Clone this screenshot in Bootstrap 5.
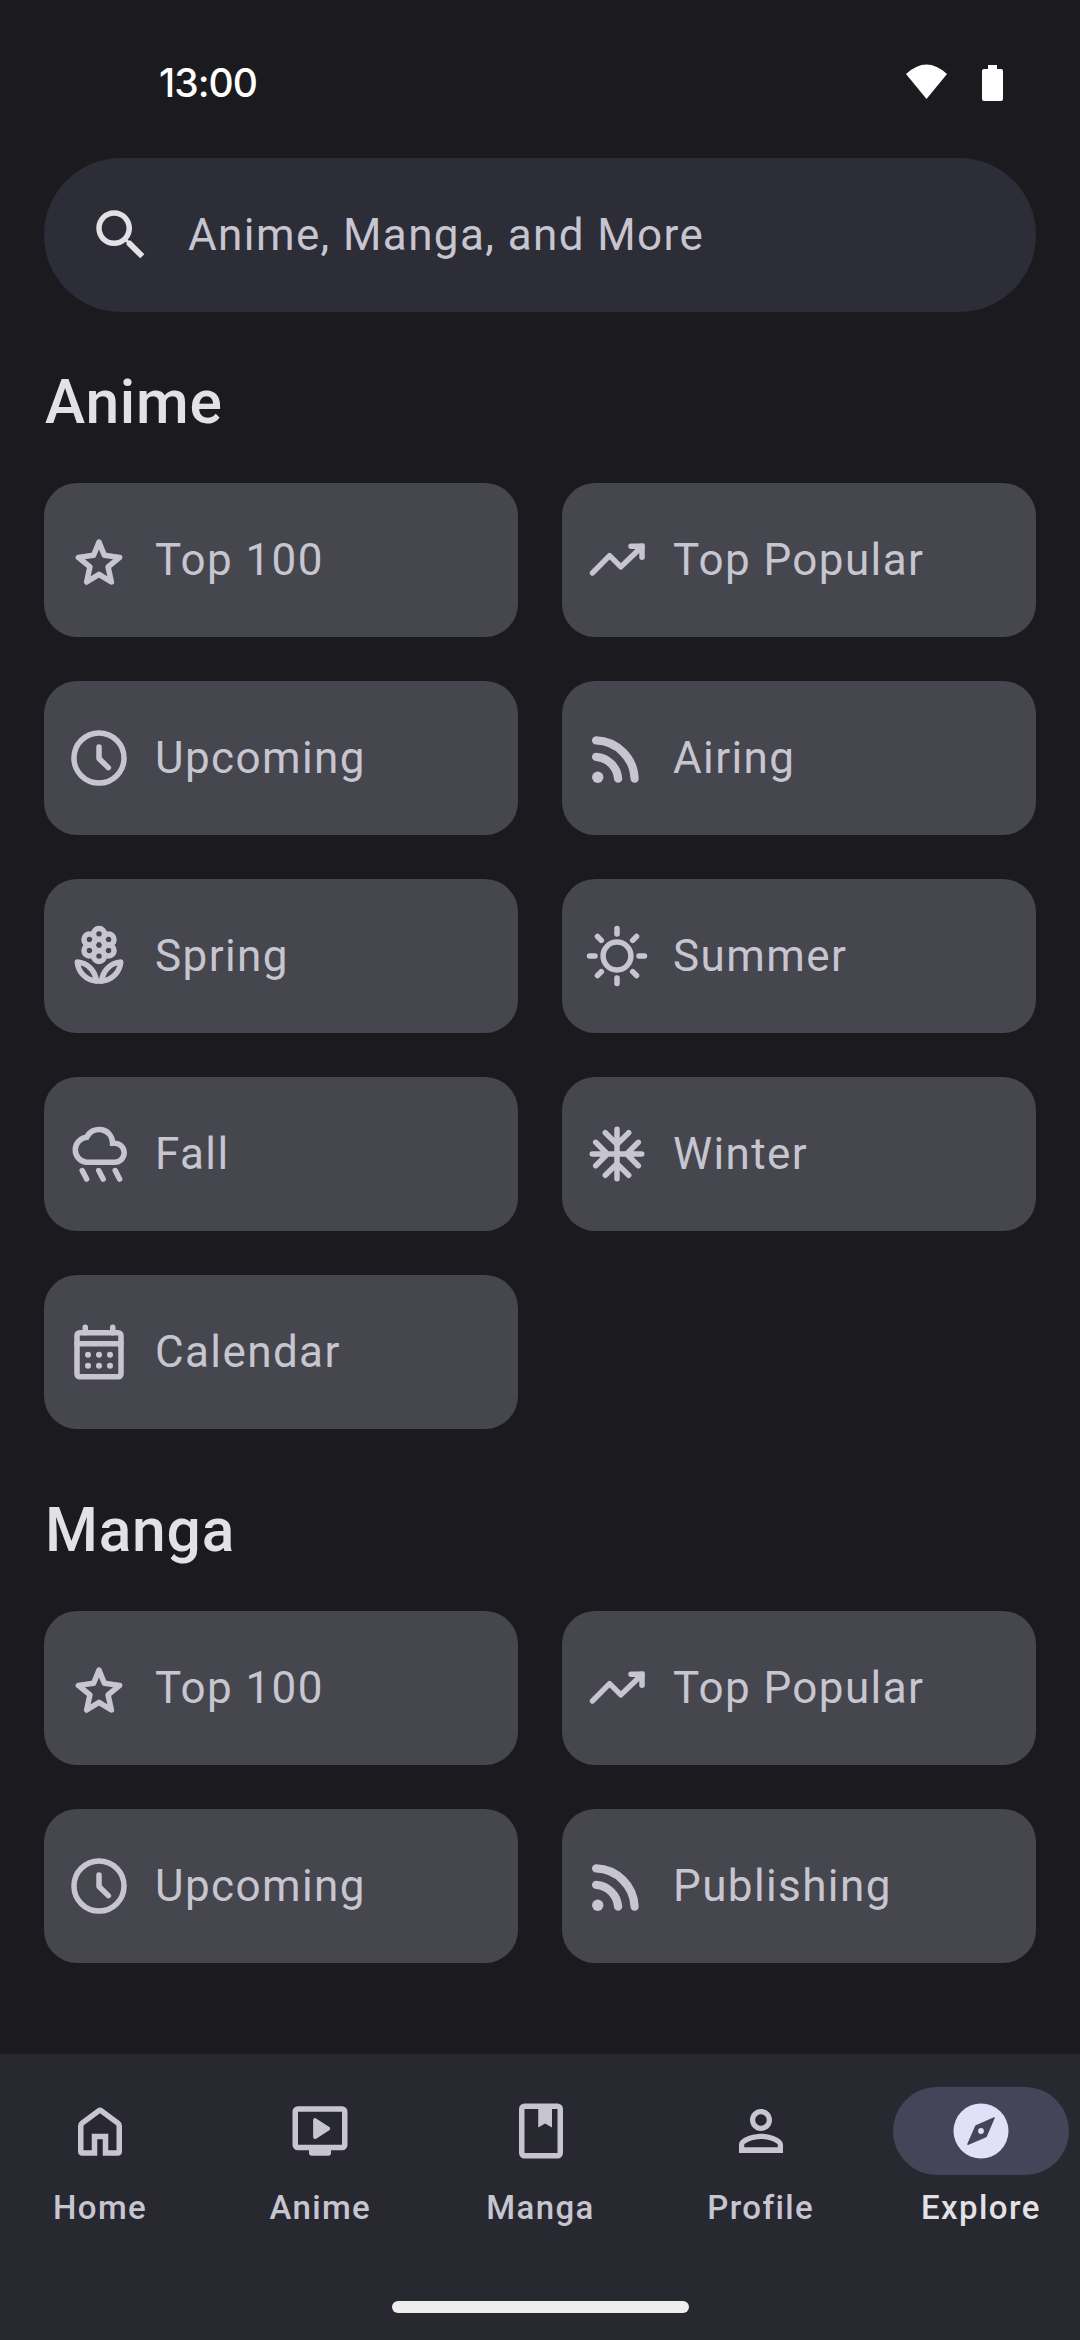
<!DOCTYPE html>
<html lang="en" data-bs-theme="dark">
<head>
<meta charset="utf-8">
<meta name="viewport" content="width=device-width, initial-scale=1">
<title>Explore</title>
<link href="https://cdn.jsdelivr.net/npm/bootstrap@5.3.0/dist/css/bootstrap.min.css" rel="stylesheet">
<style>
  body { background: #1b1b1f; color: #c7c5d0; font-family: Roboto, "Liberation Sans", sans-serif; font-size: 44px; line-height: 66px; letter-spacing: 1.4px; }
  .screen { width: 1080px; height: 2340px; }
  .ico { width: 66px; height: 66px; flex: none; fill: currentColor; }
  .ico .ln, .ln { fill: none; stroke: currentColor; stroke-width: 2; stroke-linecap: round; stroke-linejoin: round; }
  .status-bar { height: 158px; padding: 7px 76px 0 158px; color: #fff; }
  .clock { font-family: Inter, sans-serif; font-weight: 500; font-size: 39px; letter-spacing: -1px; padding-left: 1px; }
  .page { padding: 0 44px; }
  .search-pill { height: 154px; padding: 0 44px; gap: 34px; background: #2d2d38; }
  .search-pill .ico { color: #e4e1e6; }
  .sect-title { margin: 0; color: #e4e1e6; font-size: 60.5px; line-height: 77px; font-weight: 540; letter-spacing: .8px; padding-left: 1px; padding-bottom: 42px; }
  .title-a { padding-top: 52px; }
  .title-m { padding-top: 63px; }
  .tiles { --bs-gutter-x: 44px; --bs-gutter-y: 44px; }
  .tile { height: 154px; padding: 0 22px; gap: 23px; border-radius: 33px; background: #46464f; color: inherit; }
  .bottom-nav { height: 286px; background: #282831; padding-top: 33px; }
  .bottom-nav .items { gap: 22px; padding-left: 1px; }
  .nav-tab { flex: 1 1 0; color: #c7c5d0; font-size: 33px; line-height: 44px; font-weight: 500; gap: 11px; }
  .nav-tab .pill { width: 176px; height: 88px; }
  .nav-tab.on { color: #e4e1e6; }
  .nav-tab.on .pill { background: #444559; color: #e1e0f9; }
  .handle { width: 297px; height: 12px; border-radius: 6px; background: #eee; margin-bottom: 27px; }
</style>
</head>
<body>
<svg class="d-none" xmlns="http://www.w3.org/2000/svg">
  <symbol id="search" viewBox="0 0 24 24"><path d="M15.5 14h-.79l-.28-.27C15.41 12.59 16 11.11 16 9.5 16 5.91 13.09 3 9.5 3S3 5.91 3 9.5 5.91 16 9.5 16c1.61 0 3.09-.59 4.23-1.57l.27.28v.79l5 4.99L20.49 19l-4.99-5zm-6 0C7.01 14 5 11.99 5 9.5S7.01 5 9.5 5 14 7.01 14 9.5 11.99 14 9.5 14z"/></symbol>
  <symbol id="star" viewBox="0 0 24 24"><path class="ln" d="M12 5.5 13.95 10.3 19.5 11.05 15.3 14.5 16.5 20 12 17.2 7.5 20 8.7 14.5 4.5 11.05 10.05 10.3Z"/></symbol>
  <symbol id="trend" viewBox="0 0 24 24"><path class="ln" d="M3.1 16.7 9.3 10.4 13.4 14.5 21 7.2M17.1 7H21.1V11"/><path d="M20 6h2v2z"/></symbol>
  <symbol id="clock" viewBox="0 0 24 24"><circle class="ln" cx="12" cy="12" r="9.1"/><path class="ln" d="M12 8V12.2L15.4 15.5"/></symbol>
  <symbol id="rss" viewBox="0 0 24 24"><circle cx="5" cy="19" r="2.05"/><path class="ln" style="stroke-width:3" d="M4.4 11.6A8.6 8.6 0 0 1 12.4 19.5M4.4 5.6A14.5 14.5 0 0 1 18.4 19.5"/></symbol>
  <symbol id="flower" viewBox="0 0 24 24"><g class="ln"><circle cx="12" cy="8" r="2.05"/><circle cx="12" cy="4" r="2"/><circle cx="12" cy="12" r="2"/><circle cx="15.46" cy="6" r="2"/><circle cx="15.46" cy="10" r="2"/><circle cx="8.54" cy="6" r="2"/><circle cx="8.54" cy="10" r="2"/><path d="M4.1 14.2C4.4 17.8 7.2 20.8 11 21.1 10.7 17.4 7.8 14.5 4.1 14.2ZM19.9 14.2C19.6 17.8 16.8 20.8 13 21.1 13.3 17.4 16.2 14.5 19.9 14.2Z"/><path style="stroke-linecap:butt" d="M10.6 21.1H13.4"/></g></symbol>
  <symbol id="sun" viewBox="0 0 24 24"><g class="ln"><circle cx="12" cy="12" r="5.05"/><path d="M12 2v2M12 20v2M2 12h2M20 12h2M4.9 4.9 6.3 6.3M17.7 17.7 19.1 19.1M19.1 4.9 17.7 6.3M6.3 17.7 4.9 19.1"/></g></symbol>
  <symbol id="rain" viewBox="0 0 24 24"><g class="ln"><path style="stroke-linejoin:miter" d="M7.4 15A4.55 4.55 0 0 1 7.5 5.95 4.95 4.95 0 0 1 16.95 8.1H17.7A3.45 3.45 0 0 1 17.7 15Z"/><path d="M5.9 18 7.5 21.1M11.9 18 13.5 21.1M17.9 18 19.5 21.1"/></g></symbol>
  <symbol id="snow" viewBox="0 0 24 24"><path class="ln" d="M12 3V21M3 12H21M7.75 4.25 12 8.5 16.25 4.25M7.75 19.75 12 15.5 16.25 19.75M4.25 7.75 8.5 12 4.25 16.25M19.75 7.75 15.5 12 19.75 16.25"/></symbol>
  <symbol id="cal" viewBox="0 0 24 24"><g class="ln"><rect x="4" y="5" width="16" height="16" rx="1"/><path d="M4 9H20M7 3V5M17 3V5"/></g><circle cx="8" cy="13" r="1.1"/><circle cx="12" cy="13" r="1.1"/><circle cx="16" cy="13" r="1.1"/><circle cx="8" cy="17" r="1.1"/><circle cx="12" cy="17" r="1.1"/><circle cx="16" cy="17" r="1.1"/></symbol>
  <symbol id="home" viewBox="0 0 24 24"><path fill-rule="evenodd" d="M4 10.2Q4 9 5 8.3L11 3.8Q12 3.1 13 3.8L19 8.3Q20 9 20 10.2V19.4Q20 21 18.4 21H13V15H11V21H5.6Q4 21 4 19.4ZM6 10V19H9V13H15V19H18V10L12 5.5Z"/></symbol>
  <symbol id="tv" viewBox="0 0 24 24"><rect class="ln" x="3" y="4" width="18" height="14" rx="1"/><path d="M8 18.5H16V20Q16 21 15 21H9Q8 21 8 20Z"/><path style="stroke:currentColor;stroke-width:1.4;stroke-linejoin:round" d="M10.2 8V14.2L15 11.1Z"/></symbol>
  <symbol id="book" viewBox="0 0 24 24"><rect class="ln" x="5" y="3" width="14" height="18" rx="1"/><path d="M11 3H16V10.7L13.5 9.3 11 10.7Z"/></symbol>
  <symbol id="person" viewBox="0 0 24 24"><path d="M12 5.9c1.16 0 2.1.94 2.1 2.1s-.94 2.1-2.1 2.1S9.9 9.16 9.9 8s.94-2.1 2.1-2.1m0 9c2.97 0 6.1 1.46 6.1 2.1v.9H5.9V17c0-.64 3.13-2.1 6.1-2.1M12 4C9.79 4 8 5.79 8 8s1.79 4 4 4 4-1.79 4-4-1.79-4-4-4zm0 9c-2.67 0-8 1.34-8 4v3h16v-3c0-2.66-5.33-4-8-4z"/></symbol>
  <symbol id="compass" viewBox="0 0 24 24"><path fill-rule="evenodd" d="M12 2A10 10 0 1 0 12 22 10 10 0 1 0 12 2ZM16.7 7Q17.1 6.9 17 7.3L14.2 13.8Q14 14.2 13.7 14.4L7.3 17.1Q6.9 17.1 7 16.7L9.8 10.3Q9.9 10 10.3 9.8Z"/><circle cx="12" cy="12" r="1.05"/></symbol>
</svg>

<div class="screen d-flex flex-column overflow-hidden">
  <header class="status-bar d-flex align-items-center justify-content-between">
    <span class="clock">13:00</span>
    <svg width="98" height="38" viewBox="0 0 98 38" fill="#fff"><path d="M0 10Q20.5-9 41 10L20.5 35Z"/><path d="M82 1h9v4h4q2 0 2 2v28q0 2-2 2H78q-2 0-2-2V7q0-2 2-2h4z"/></svg>
  </header>

  <main class="page flex-grow-1">
    <div class="search-pill rounded-pill d-flex align-items-center"><svg class="ico"><use href="#search"/></svg><span>Anime, Manga, and More</span></div>

    <h2 class="sect-title title-a">Anime</h2>
    <div class="row row-cols-2 tiles">
      <div class="col"><div class="tile d-flex align-items-center"><svg class="ico"><use href="#star"/></svg><span>Top 100</span></div></div>
      <div class="col"><div class="tile d-flex align-items-center"><svg class="ico"><use href="#trend"/></svg><span>Top Popular</span></div></div>
      <div class="col"><div class="tile d-flex align-items-center"><svg class="ico"><use href="#clock"/></svg><span>Upcoming</span></div></div>
      <div class="col"><div class="tile d-flex align-items-center"><svg class="ico"><use href="#rss"/></svg><span>Airing</span></div></div>
      <div class="col"><div class="tile d-flex align-items-center"><svg class="ico"><use href="#flower"/></svg><span>Spring</span></div></div>
      <div class="col"><div class="tile d-flex align-items-center"><svg class="ico"><use href="#sun"/></svg><span>Summer</span></div></div>
      <div class="col"><div class="tile d-flex align-items-center"><svg class="ico"><use href="#rain"/></svg><span>Fall</span></div></div>
      <div class="col"><div class="tile d-flex align-items-center"><svg class="ico"><use href="#snow"/></svg><span>Winter</span></div></div>
      <div class="col"><div class="tile d-flex align-items-center"><svg class="ico"><use href="#cal"/></svg><span>Calendar</span></div></div>
    </div>

    <h2 class="sect-title title-m">Manga</h2>
    <div class="row row-cols-2 tiles">
      <div class="col"><div class="tile d-flex align-items-center"><svg class="ico"><use href="#star"/></svg><span>Top 100</span></div></div>
      <div class="col"><div class="tile d-flex align-items-center"><svg class="ico"><use href="#trend"/></svg><span>Top Popular</span></div></div>
      <div class="col"><div class="tile d-flex align-items-center"><svg class="ico"><use href="#clock"/></svg><span>Upcoming</span></div></div>
      <div class="col"><div class="tile d-flex align-items-center"><svg class="ico"><use href="#rss"/></svg><span>Publishing</span></div></div>
    </div>
  </main>

  <nav class="bottom-nav d-flex flex-column align-items-center justify-content-between">
    <div class="items d-flex w-100">
      <div class="nav-tab d-flex flex-column align-items-center"><span class="pill rounded-pill d-flex align-items-center justify-content-center"><svg class="ico"><use href="#home"/></svg></span><span>Home</span></div>
      <div class="nav-tab d-flex flex-column align-items-center"><span class="pill rounded-pill d-flex align-items-center justify-content-center"><svg class="ico"><use href="#tv"/></svg></span><span>Anime</span></div>
      <div class="nav-tab d-flex flex-column align-items-center"><span class="pill rounded-pill d-flex align-items-center justify-content-center"><svg class="ico"><use href="#book"/></svg></span><span>Manga</span></div>
      <div class="nav-tab d-flex flex-column align-items-center"><span class="pill rounded-pill d-flex align-items-center justify-content-center"><svg class="ico"><use href="#person"/></svg></span><span>Profile</span></div>
      <div class="nav-tab on d-flex flex-column align-items-center"><span class="pill rounded-pill d-flex align-items-center justify-content-center"><svg class="ico"><use href="#compass"/></svg></span><span>Explore</span></div>
    </div>
    <div class="handle"></div>
  </nav>
</div>
<script src="https://cdn.jsdelivr.net/npm/bootstrap@5.3.0/dist/js/bootstrap.bundle.min.js"></script>
</body>
</html>
